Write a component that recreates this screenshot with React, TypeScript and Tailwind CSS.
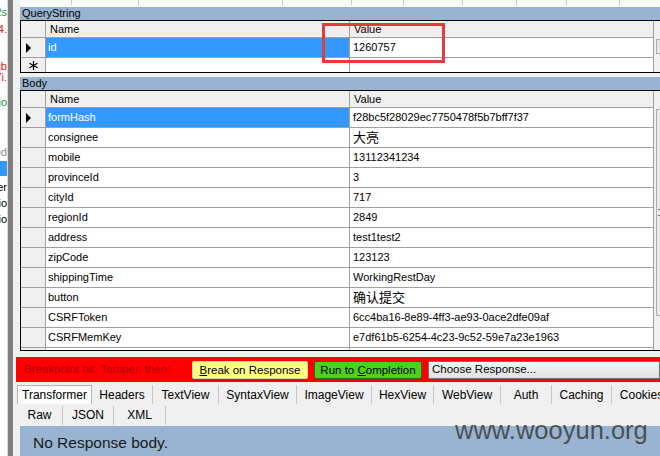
import React from 'react'

const ui = { fontFamily: '"Liberation Sans", Arial, sans-serif' }
const cjk = { fontFamily: '"Liberation Sans", "Noto Sans CJK SC", sans-serif' }

function Arrow() {
  return (
    <svg width="6" height="10" viewBox="0 0 6 10">
      <polygon points="0,0 5,5 0,10" fill="#000" />
    </svg>
  )
}

function Star() {
  return (
    <svg width="9" height="9" viewBox="0 0 9 9" stroke="#000" strokeWidth="1.2">
      <line x1="4.5" y1="0" x2="4.5" y2="9" />
      <line x1="0.5" y1="2.2" x2="8.5" y2="6.8" />
      <line x1="0.5" y1="6.8" x2="8.5" y2="2.2" />
    </svg>
  )
}

function HeaderRow() {
  return (
    <div className="flex h-[17px] border-b border-[#a0a0a0] bg-[#f0f0f0] text-[11px] text-black">
      <div className="w-[25px] border-r border-[#a0a0a0]" />
      <div className="flex w-[304px] items-center border-r border-[#a0a0a0] pl-[4px]">Name</div>
      <div className="flex w-[304px] items-center border-r border-[#a0a0a0] pl-[4px]">Value</div>
    </div>
  )
}

type RowProps = { name: string; value: string; selected?: boolean; big?: boolean }

function Row({ name, value, selected, big }: RowProps) {
  return (
    <div className="flex h-[20px] shrink-0 border-b border-[#a0a0a0] text-[11px]">
      <div className="flex w-[25px] items-center border-r border-[#a0a0a0] bg-[#f0f0f0] pl-[5px]">
        {selected && <Arrow />}
      </div>
      <div
        className={
          'flex w-[304px] items-center border-r border-[#a0a0a0] pl-[2px] ' +
          (selected ? 'bg-[#3399ff] text-white' : 'bg-white text-black')
        }
      >
        {name}
      </div>
      <div
        className={'flex w-[304px] items-center border-r border-[#a0a0a0] bg-white pl-[3px] text-black ' + (big ? 'text-[13px]' : '')}
        style={big ? cjk : undefined}
      >
        {value}
      </div>
    </div>
  )
}

const bodyRows: RowProps[] = [
  { name: 'formHash', value: 'f28bc5f28029ec7750478f5b7bff7f37', selected: true },
  { name: 'consignee', value: '大亮', big: true },
  { name: 'mobile', value: '13112341234' },
  { name: 'provinceId', value: '3' },
  { name: 'cityId', value: '717' },
  { name: 'regionId', value: '2849' },
  { name: 'address', value: 'test1test2' },
  { name: 'zipCode', value: '123123' },
  { name: 'shippingTime', value: 'WorkingRestDay' },
  { name: 'button', value: '确认提交', big: true },
  { name: 'CSRFToken', value: '6cc4ba16-8e89-4ff3-ae93-0ace2dfe09af' },
  { name: 'CSRFMemKey', value: 'e7df61b5-6254-4c23-9c52-59e7a23e1963' },
  { name: '', value: '' },
]

const tabs1 = [
  ['Transformer', 'w-[75px]'],
  ['Headers', 'w-[61px]'],
  ['TextView', 'w-[66px]'],
  ['SyntaxView', 'w-[78px]'],
  ['ImageView', 'w-[75px]'],
  ['HexView', 'w-[62px]'],
  ['WebView', 'w-[67px]'],
  ['Auth', 'w-[51px]'],
  ['Caching', 'w-[60px]'],
  ['Cookies', 'w-[60px]'],
]

const tabs2 = [
  ['Raw', 'w-[46px]'],
  ['JSON', 'w-[51px]'],
  ['XML', 'w-[52px]'],
]

const leftBits: [string, string, string][] = [
  ['mt-[6px]', 'text-[#2e8b2e]', 'x2s'],
  ['mt-[4px]', 'text-[#e02020]', '4.'],
  ['mt-[24px]', 'text-[#e02020]', 'qb'],
  ['mt-[-2px]', 'text-[#e02020]', '7i.'],
  ['mt-[12px]', 'text-[#2e8b2e]', 'io'],
  ['mt-[37px]', 'text-[#8a8a8a]', 'ed'],
]

export default function App() {
  return (
    <div className="relative flex h-[456px] w-[660px] overflow-hidden bg-[#f0f0f0] text-black" style={ui}>
      {/* cut-off session list */}
      <div className="flex w-[8px] flex-col items-end overflow-hidden border-r border-[#dcdcdc] bg-white text-[11px] leading-[13px]">
        {leftBits.map(([m, c, t], i) => (
          <div key={i} className={'whitespace-nowrap ' + m + ' ' + c}>{t}</div>
        ))}
        <div className="mt-[2px] h-[15px] w-full shrink-0 bg-[#3399ff]" />
        <div className="mt-[5px] whitespace-nowrap">er</div>
        <div className="mt-[3px] whitespace-nowrap">io</div>
        <div className="mt-[3px] whitespace-nowrap">io</div>
      </div>
      <div className="w-[5px] shrink-0 bg-[#808080]" />

      {/* main */}
      <div className="flex min-w-0 flex-1 flex-col">
        <div className="ml-[7px] flex h-[7px] shrink-0 bg-[#fafafa]">
          {[52, 67, 144, 69, 52, 59, 54, 50, 53].map((w, i) => (
            <div key={i} className="h-[5px] shrink-0 border-r border-[#c8c8c8]" style={{ width: w }} />
          ))}
        </div>

        {/* QueryString */}
        <div className="ml-[7px] flex h-[13px] shrink-0 items-center bg-[#99b4d1] pl-[2px] text-[11px]">QueryString</div>
        <div className="ml-[7px] flex h-[53px] shrink-0 overflow-hidden border-y border-l border-black">
          <div className="flex w-[633px] shrink-0 flex-col">
            <HeaderRow />
            <Row name="id" value="1260757" selected />
            <div className="flex h-[20px] shrink-0 text-[11px]">
              <div className="flex w-[25px] justify-center border-r border-[#a0a0a0] bg-[#f0f0f0] pt-[3px]">
                <Star />
              </div>
              <div className="w-[304px] border-r border-[#a0a0a0] bg-white" />
              <div className="w-[304px] border-r border-[#a0a0a0] bg-white" />
            </div>
          </div>
          <div className="flex flex-1 flex-col bg-[#f0f0f0]">
            <div className="mt-[18px] ml-[2px] h-[15px] border border-r-0 border-[#adadad] bg-[#e6e6e6]" />
          </div>
        </div>

        {/* Body */}
        <div className="ml-[7px] mt-[4px] flex h-[13px] shrink-0 items-center bg-[#99b4d1] pl-[2px] text-[11px]">Body</div>
        <div className="ml-[7px] flex h-[261px] shrink-0 overflow-hidden border-y border-l border-black">
          <div className="flex w-[633px] shrink-0 flex-col">
            <HeaderRow />
            {bodyRows.map((r, i) => (
              <Row key={i} {...r} />
            ))}
          </div>
          <div className="flex flex-1 flex-col bg-[#f0f0f0]">
            <div className="mt-[18px] ml-[2px] flex h-[207px] items-center border border-r-0 border-[#adadad] bg-[#e8e8e8] pl-[1px]">
              <div className="h-[7px] w-[2px] border-y border-[#707070]" />
            </div>
          </div>
        </div>

        {/* breakpoint bar */}
        <div className="ml-[3px] mt-[6px] flex h-[25px] shrink-0 items-center bg-[#ff0000] text-[11.5px]">
          <span className="ml-[8px] w-[165px] whitespace-nowrap text-[#b00000]">Breakpoint hit. Tamper, then:</span>
          <button className="ml-[3px] h-[18px] w-[116px] rounded-[2px] border border-[#d8d8a8] bg-[#ffff80] text-black">
            <u>B</u>reak on Response
          </button>
          <button className="ml-[6px] h-[18px] w-[108px] rounded-[2px] border border-[#2a6a10] bg-[#4fd119] text-black">
            Run to <u>C</u>ompletion
          </button>
          <div className="ml-[6px] flex h-[18px] flex-1 items-center border border-[#707070] bg-gradient-to-b from-[#f4f4f4] to-[#e2e2e2] pl-[3px]">
            Choose Response...
          </div>
        </div>

        {/* tabs */}
        <div className="ml-[4px] flex h-[22px] shrink-0 items-end text-[12px]">
          {tabs1.map(([t, w], i) => (
            <div
              key={t}
              className={
                'flex h-[19px] shrink-0 items-center justify-center ' +
                w +
                (i === 0 ? ' border border-b-0 border-[#b4b4b4] bg-[#fbfbfb]' : ' border-r border-[#c8c8c8]')
              }
            >
              {t}
            </div>
          ))}
        </div>
        <div className="ml-[4px] flex h-[22px] shrink-0 items-center text-[12px]">
          {tabs2.map(([t, w]) => (
            <div key={t} className={'flex h-[19px] shrink-0 items-center justify-center border-r border-[#c8c8c8] ' + w}>
              {t}
            </div>
          ))}
        </div>

        <div className="ml-[7px] flex-1 bg-[#99b4d1] pl-[13px] pt-[6px] text-[15.5px] leading-[22px] text-[#1a1a1a]">
          No Response body.
        </div>
      </div>

      <div className="absolute left-[322px] top-[23px] h-[40px] w-[123px] border-[3px] border-[#e53b3b]" />
      <div
        className="absolute left-[455px] top-[415px] text-[25.5px] leading-[30px] text-[#3c3c3c]/85"
      >
        www.wooyun.org
      </div>
    </div>
  )
}
